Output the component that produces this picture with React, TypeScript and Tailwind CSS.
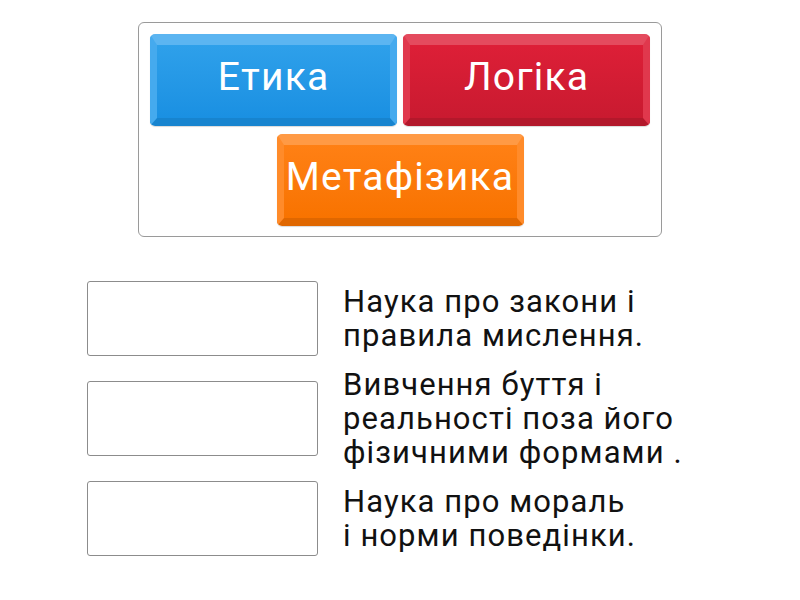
import React from "react";

const font = { fontFamily: "Roboto, 'Noto Sans', sans-serif" };

function Tile({
  label,
  cls,
}: {
  label: string;
  cls: string;
}) {
  return (
    <div
      className={
        "w-[247px] h-[92px] rounded-[5px] border-t-[11px] border-x-[7px] border-b-[8px] flex items-center justify-center text-white text-[39px] tracking-[0.03em] leading-none pb-[9px] shadow-[0_1px_1px_rgba(0,0,0,0.15)] " +
        cls
      }
    >
      {label}
    </div>
  );
}

const rows: string[][] = [
  ["Наука про закони і", "правила мислення."],
  ["Вивчення буття і", "реальності поза його", "фізичними формами ."],
  ["Наука про мораль", "і норми поведінки."],
];

export default function App() {
  return (
    <div className="w-[800px] h-[600px] bg-white overflow-hidden" style={font}>
      <div className="pt-[22px] flex justify-center">
        <div className="w-[524px] rounded-[6px] border border-[#9a9a9a] pt-[11px] pb-[10px] flex flex-wrap justify-center gap-x-[6px] gap-y-[8px]">
          <Tile
            label="Етика"
            cls="bg-linear-to-b from-[#2ea0ea] to-[#1a90e2] border-t-[#5cb5f1] border-x-[#45aaee] border-b-[#1784cf]"
          />
          <Tile
            label="Логіка"
            cls="bg-linear-to-b from-[#dd1f37] to-[#c91a30] border-t-[#e44b5e] border-x-[#e0384d] border-b-[#b3182b]"
          />
          <Tile
            label="Метафізика"
            cls="bg-linear-to-b from-[#ff8014] to-[#f87300] border-t-[#ff9a45] border-x-[#ff8b2a] border-b-[#e06700]"
          />
        </div>
      </div>
      <div className="mt-[44px] ml-[87px] flex flex-col gap-[25px]">
        {rows.map((lines, i) => (
          <div key={i} className="h-[75px] flex items-center gap-[25px]">
            <div className="w-[231px] h-[75px] shrink-0 rounded-[3px] border border-[#8c8c8c] bg-white" />
            <div className="text-[31px] tracking-[0.035em] leading-[34px] text-[#111]">
              {lines.map((l, j) => (
                <div key={j} className="whitespace-nowrap">
                  {l}
                </div>
              ))}
            </div>
          </div>
        ))}
      </div>
    </div>
  );
}
